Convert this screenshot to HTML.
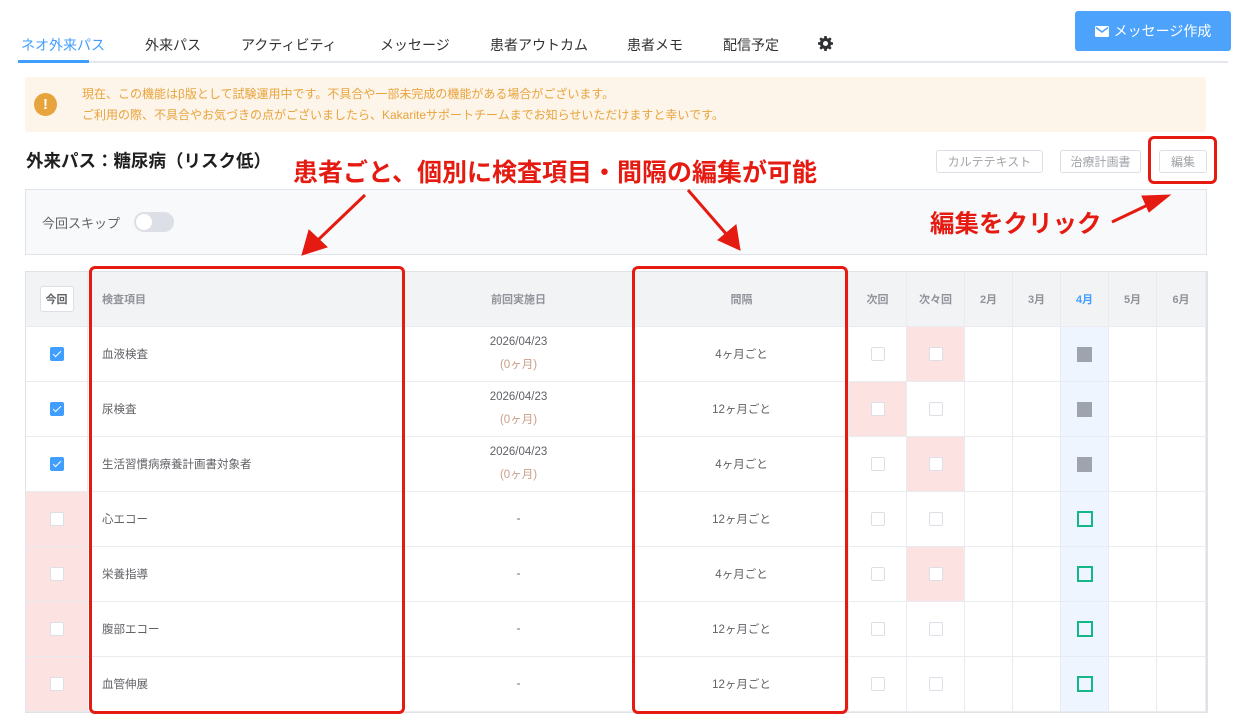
<!DOCTYPE html>
<html><head><meta charset="utf-8"><style>
*{box-sizing:border-box;margin:0;padding:0}
body{width:1240px;height:727px;background:#fff;font-family:"Liberation Sans","Noto Sans CJK JP",sans-serif;position:relative;overflow:hidden;color:#303133}
.a{position:absolute}
.tab{position:absolute;top:35px;font-size:14px;color:#303133;white-space:nowrap}
.cell{position:absolute;border-right:1px solid #e9ebf0;border-bottom:1px solid #e9ebf0;display:flex;align-items:center;justify-content:center;font-size:11.5px;color:#606266}
.hd{font-weight:bold;color:#909399;font-size:11px;background:#f2f3f5}
.cb{width:14px;height:14px;border:1px solid #dcdfe6;border-radius:2px;background:#fff}
.cb.on{background:#409eff;border-color:#409eff;position:relative}
.cb.on:after{content:"";position:absolute;left:4px;top:1px;width:3px;height:7px;border:solid #fff;border-width:0 1.5px 1.5px 0;transform:rotate(45deg)}
.sq{width:15px;height:15px;background:#9ea3ad}
.gs{width:16px;height:16px;border:2px solid #13b886}
.rb{position:absolute;border:3px solid #e51b12;border-radius:6px}
.btn{position:absolute;top:150px;height:23px;border:1px solid #dcdfe6;border-radius:3px;font-size:12px;color:#a0a3a9;display:flex;align-items:center;justify-content:center;background:#fff}
.rt{position:absolute;color:#e51b12;font-weight:bold;white-space:nowrap}
</style></head><body>
<div class="tab" style="left:21px;color:#409eff">ネオ外来パス</div>
<div class="tab" style="left:145px">外来パス</div>
<div class="tab" style="left:241px">アクティビティ</div>
<div class="tab" style="left:380px">メッセージ</div>
<div class="tab" style="left:490px">患者アウトカム</div>
<div class="tab" style="left:627px">患者メモ</div>
<div class="tab" style="left:723px">配信予定</div>
<svg class="a" style="left:818px;top:36px" width="15" height="15" viewBox="0 0 16 16"><path fill="#303133" d="M6.8 0h2.4l.4 2.2 1.3.6 1.9-1.3 1.7 1.7-1.3 1.9.6 1.3 2.2.4v2.4l-2.2.4-.6 1.3 1.3 1.9-1.7 1.7-1.9-1.3-1.3.6-.4 2.2H6.8l-.4-2.2-1.3-.6-1.900 1.3-1.7-1.7 1.3-1.9-.6-1.3L0 9.2V6.8l2.2-.4.6-1.3-1.3-1.9 1.7-1.7 1.9 1.3 1.3-.6zM8 5.3A2.7 2.7 0 1 0 8 10.7 2.7 2.7 0 1 0 8 5.3z"/></svg>
<div class="a" style="left:20px;top:61px;width:1208px;height:2px;background:#e4e7ed"></div>
<div class="a" style="left:18px;top:60px;width:71px;height:3px;background:#409eff"></div>
<div class="a" style="left:1075px;top:11px;width:156px;height:40px;background:#4da3fb;border-radius:3px;color:#fff;font-size:14px;display:flex;align-items:center;justify-content:center;gap:5px"><svg width="14" height="11" viewBox="0 0 14 11"><rect width="14" height="11" rx="1.5" fill="#fff"/><path d="M1 1.5l6 4.5 6-4.5" stroke="#4da3fb" stroke-width="1.6" fill="none"/></svg>メッセージ作成</div>
<div class="a" style="left:25px;top:77px;width:1181px;height:55px;background:#fdf4ea;border-radius:3px"></div>
<div class="a" style="left:34px;top:93px;width:23px;height:23px;border-radius:50%;background:#e8a43c;color:#fff;font-weight:bold;font-size:15px;text-align:center;line-height:23px">!</div>
<div class="a" style="left:82px;top:84px;font-size:12px;color:#e8a43c;line-height:21px;white-space:nowrap">現在、この機能はβ版として試験運用中です。不具合や一部未完成の機能がある場合がございます。<br>ご利用の際、不具合やお気づきの点がございましたら、Kakariteサポートチームまでお知らせいただけますと幸いです。</div>
<div class="a" style="left:26px;top:148px;font-size:17.5px;font-weight:bold;color:#1f1f1f;white-space:nowrap">外来パス：糖尿病（リスク低）</div>
<div class="btn" style="left:936px;width:107px">カルテテキスト</div>
<div class="btn" style="left:1060px;width:81px">治療計画書</div>
<div class="btn" style="left:1159px;width:48px">編集</div>
<div class="a" style="left:25px;top:189px;width:1182px;height:66px;background:#f8f9fb;border:1px solid #e0e3e8"></div>
<div class="a" style="left:42px;top:213px;font-size:13px;color:#606266">今回スキップ</div>
<div class="a" style="left:134px;top:212px;width:40px;height:20px;border-radius:10px;background:#dcdfe6"><div class="a" style="left:2px;top:2px;width:16px;height:16px;border-radius:50%;background:#fff"></div></div>
<div class="a" style="left:25px;top:271px;width:1183px;height:442px;border:1px solid #dfe2e7;border-right-width:2px;border-bottom-width:2px"></div>
<div id="t"></div>
<div class="rb" style="left:89px;top:266px;width:316px;height:448px"></div>
<div class="rb" style="left:632px;top:266px;width:216px;height:448px"></div>
<div class="rb" style="left:1148px;top:136px;width:69px;height:48px"></div>
<div class="rt" style="left:293px;top:153px;font-size:25px">患者ごと、個別に検査項目・間隔の編集が可能</div>
<div class="rt" style="left:930px;top:205px;font-size:24.5px">編集をクリック</div>
<svg class="a" style="left:0;top:0" width="1240" height="727"><g fill="#e51b12" stroke="#e51b12">
<line x1="365" y1="195" x2="318" y2="240" stroke-width="3"/><polygon points="302,255 309,230 327,247" stroke-width="1"/>
<line x1="688" y1="190" x2="728" y2="236" stroke-width="3"/><polygon points="740,250 718,240 736,225" stroke-width="1"/>
<line x1="1112" y1="222" x2="1152" y2="203" stroke-width="3"/><polygon points="1170,195 1149,212 1142,196" stroke-width="1"/>
</g></svg>
<script>
var cols=[[26,62],[88,315],[403,232],[635,214],[849,58],[907,58],[965,48],[1013,48],[1061,48],[1109,48],[1157,49]];
var hd=['<span style="border:1px solid #dcdfe6;border-radius:3px;background:#fff;padding:4px 5px;color:#606266">今回</span>','検査項目','前回実施日','間隔','次回','次々回','2月','3月','4月','5月','6月'];
var names=['血液検査','尿検査','生活習慣病療養計画書対象者','心エコー','栄養指導','腹部エコー','血管伸展'];
var iv=['4ヶ月ごと','12ヶ月ごと','4ヶ月ごと','12ヶ月ごと','4ヶ月ごと','12ヶ月ごと','12ヶ月ごと'];
var h='';
function c(i,y,hh,cls,st,inner){h+='<div class="cell '+cls+'" style="left:'+cols[i][0]+'px;top:'+y+'px;width:'+cols[i][1]+'px;height:'+hh+'px;'+st+'">'+inner+'</div>';}
for(var i=0;i<11;i++){c(i,272,55,'hd',(i==1?'justify-content:flex-start;padding-left:14px;':'')+(i==8?'color:#409eff;':''),hd[i]);}
for(var r=0;r<7;r++){var y=327+r*55;
c(0,y,55,'',r>=3?'background:#fde2e2':'','<div class="cb'+(r<3?' on':'')+'"></div>');
c(1,y,55,'','justify-content:flex-start;padding-left:14px',names[r]);
c(2,y,55,'','flex-direction:column;line-height:23px',r<3?'<span>2026/04/23</span><span style="color:#c9a08c">(0ヶ月)</span>':'-');
c(3,y,55,'','',iv[r]);
c(4,y,55,'',r==1?'background:#fde2e2':'','<div class="cb"></div>');
c(5,y,55,'',(r==0||r==2||r==4)?'background:#fde2e2':'','<div class="cb"></div>');
c(6,y,55,'','','');c(7,y,55,'','','');
c(8,y,55,'','background:#eef5ff',r<3?'<div class="sq"></div>':'<div class="gs"></div>');
c(9,y,55,'','','');c(10,y,55,'','','');}
document.getElementById('t').innerHTML=h;
</script>
</body></html>
